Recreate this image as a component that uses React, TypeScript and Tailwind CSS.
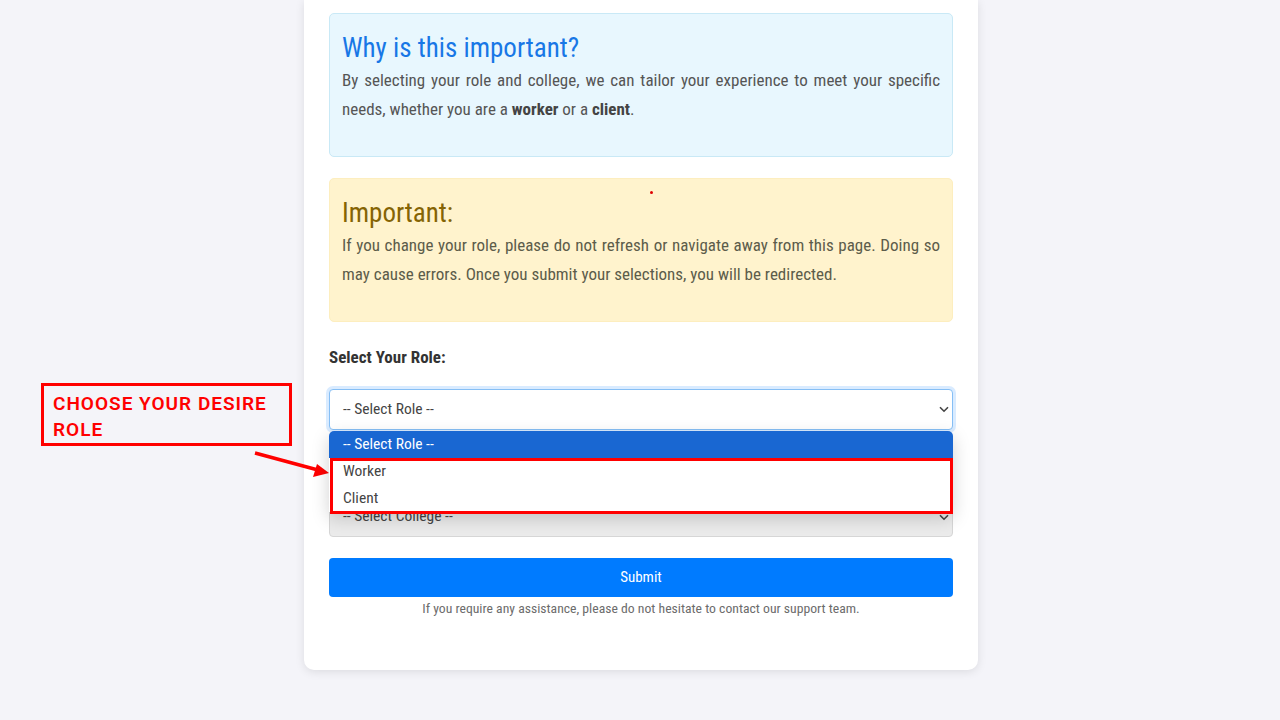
import React from "react";

const narrow = { fontFamily: '"Roboto Condensed", "Liberation Sans", Arial, sans-serif' };

function Chevron({ className }: { className?: string }) {
  return (
    <svg width="10" height="7" viewBox="0 0 10 7" className={className}>
      <path d="M1 1.2 L5 5.2 L9 1.2" fill="none" stroke="#444" strokeWidth="1.6" />
    </svg>
  );
}

export default function App() {
  return (
    <div className="relative min-h-[720px] bg-[#f4f4f9] pb-[51px]" style={narrow}>
      {/* main card */}
      <div className="ml-[304px] w-[674px] rounded-b-[10px] bg-white px-[25px] pt-[13px] pb-[53px] shadow-[0_2px_10px_rgba(0,0,0,0.1)]">
        {/* info box */}
        <div className="rounded-[5px] border border-[#c9e9f6] bg-[#e8f7fe] px-[12px] pt-[17px] pb-[32px]">
          <h2 className="text-[27px] leading-[34px] text-[#1877e6]">Why is this important?</h2>
          <p className="mt-[1px] text-justify text-[17px] leading-[29px] text-[#555]">
            By selecting your role and college, we can tailor your experience to meet your specific needs, whether you are a{" "}
            <b className="text-[#444]">worker</b> or a <b className="text-[#444]">client</b>.
          </p>
        </div>

        {/* warning box */}
        <div className="relative mt-[21px] rounded-[5px] border border-[#fdeebf] bg-[#fff3cd] px-[12px] pt-[17px] pb-[32px]">
          <span className="absolute left-[320px] top-[12px] h-[3px] w-[3px] rounded-full bg-[#e00000]"></span>
          <h2 className="text-[27px] leading-[34px] text-[#856404]">Important:</h2>
          <p className="mt-[1px] text-justify text-[17px] leading-[29px] text-[#5c5c4a]">
            If you change your role, please do not refresh or navigate away from this page. Doing so may cause errors. Once you submit your selections, you will be redirected.
          </p>
        </div>

        {/* role */}
        <div className="mt-[23px] text-[17px] font-bold leading-[24px] text-[#333]">Select Your Role:</div>
        <div className="relative mt-[20px]">
          <div className="flex h-[41px] items-center justify-between rounded-[4px] border border-[#86bff5] bg-white pl-[13px] pr-[3px] text-[15.5px] text-[#444] shadow-[0_0_0_3px_rgba(0,123,255,0.15)]">
            <span>-- Select Role --</span>
            <Chevron />
          </div>

          {/* open dropdown */}
          <div className="absolute left-0 right-0 top-[42px] z-10 overflow-hidden rounded-t-[5px] bg-white text-[15.5px] shadow-[0_6px_18px_rgba(0,0,0,0.18)]">
            <div className="flex h-[27px] items-center bg-[#1967d2] pl-[14px] text-white">-- Select Role --</div>
            <div className="flex h-[27px] items-center pl-[14px] text-[#444]">Worker</div>
            <div className="flex h-[27px] items-center pl-[14px] text-[#444]">Client</div>
          </div>
          <div className="absolute left-[1px] right-0 top-[69px] z-20 h-[56px] border-[3px] border-[#ff0000]"></div>
        </div>

        {/* college */}
        <div className="mt-[24px] text-[17px] font-bold leading-[24px] text-[#333]">Select Your College:</div>
        <div className="mt-[19px] flex h-[40px] items-center justify-between rounded-[4px] border border-[#d6d6d6] bg-[#ebebeb] pl-[13px] pr-[3px] text-[15.5px] text-[#444]">
          <span>-- Select College --</span>
          <Chevron />
        </div>

        <button className="mt-[21px] flex h-[39px] w-full items-center justify-center rounded-[4px] bg-[#007bff] text-[15px] text-white">
          Submit
        </button>
        <p className="mt-[2px] text-center text-[13.7px] leading-[18px] text-[#6c6c6c]">
          If you require any assistance, please do not hesitate to contact our support team.
        </p>
      </div>

      {/* annotation */}
      <div
        className="absolute left-[41px] top-[383px] h-[63px] w-[251px] border-[3px] border-[#ff0000] pl-[9px] pt-[5px] text-[19px] font-semibold uppercase leading-[26px] tracking-[1px] text-[#ff0000]"
        style={{ fontFamily: '"Roboto", "Liberation Sans", sans-serif' }}
      >
        Choose your desire role
      </div>
      <svg className="absolute left-[250px] top-[446px]" width="85" height="35" viewBox="0 0 85 35">
        <line x1="5" y1="7" x2="68" y2="24" stroke="#ff0000" strokeWidth="3.5" />
        <polygon points="79,27 63,31 67,18" fill="#ff0000" />
      </svg>
    </div>
  );
}
